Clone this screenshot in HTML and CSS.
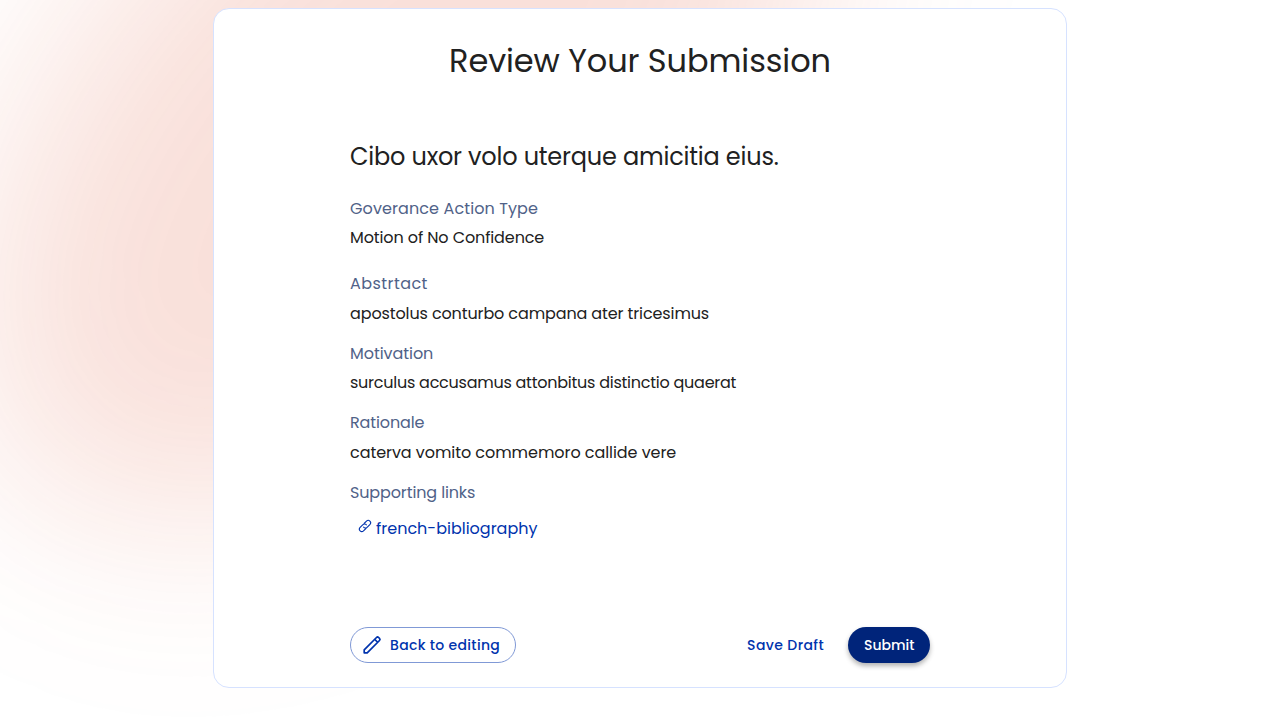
FILE: index.html
```html
<!DOCTYPE html>
<html lang="en">
<head>
<meta charset="utf-8">
<title>Review Your Submission</title>
<link rel="stylesheet" href="styles.css">
</head>
<body>
<div class="backdrop"><div class="glow"></div></div>
<main class="card">
  <h1 class="title">Review Your Submission</h1>
  <div class="content">
    <h2 class="subject">Cibo uxor volo uterque amicitia eius.</h2>
    <section class="field field-type"><h3 class="label">Goverance Action Type</h3><p class="value">Motion of No Confidence</p></section>
    <section class="field field-abstract"><h3 class="label">Abstrtact</h3><p class="value">apostolus conturbo campana ater tricesimus</p></section>
    <section class="field field-motivation"><h3 class="label">Motivation</h3><p class="value">surculus accusamus attonbitus distinctio quaerat</p></section>
    <section class="field field-rationale"><h3 class="label">Rationale</h3><p class="value">caterva vomito commemoro callide vere</p></section>
    <section class="field field-links"><h3 class="label">Supporting links</h3>
      <a class="link"><svg class="link-icon" viewBox="0 0 14 14"><g transform="rotate(-45 7 7)"><path d="M6.200 9.400H2.500a2.400 2.400 0 0 1 0-4.800H6.500a2.300 2.300 0 0 1 2.200 3"/><path d="M7.800 4.600h3.700a2.400 2.400 0 0 1 0 4.800H7.500a2.300 2.300 0 0 1-2.200-3"/></g></svg><span>french-bibliography</span></a>
    </section>
    <div class="actions">
      <button class="btn outlined"><svg class="pencil" viewBox="0 0 20 20"><path d="M2.200 17.800v-3L14.500 2.500a1.500 1.500 0 0 1 2.100 0l.9.900a1.500 1.500 0 0 1 0 2.100L5.200 17.800zM13 4.600l2.400 2.400"/></svg><span>Back to editing</span></button>
      <div class="right"><button class="btn save">Save Draft</button><button class="btn filled">Submit</button></div>
    </div>
  </div>
</main>
</body>
</html>
```

FILE: styles.css
```css
* { box-sizing: border-box; }
body { margin: 0; height: 720px; padding-top: 8px; overflow: hidden; background: #fff; font-family: Poppins, Inter, sans-serif; color: #212121; }
.backdrop { position: absolute; inset: 0; z-index: -1; overflow: hidden; }
.glow { position: absolute; left: -115px; top: -180px; width: 1030px; height: 580px; border-radius: 50%; background: rgba(218, 62, 22, .16); filter: blur(98px); transform: rotate(-43deg); }
.card { width: 854px; height: 680px; margin: 0 auto; border: 1px solid #d6e2ff; border-radius: 16px; background: #fff; }
.title { margin: 0; height: 132px; padding-top: 28px; text-align: center; font-size: 32px; line-height: 48px; font-weight: 400; letter-spacing: -.09px; }
.content { width: 580px; margin: 0 auto; }
.subject { margin: 0 0 23.600px; font-size: 24px; line-height: 32px; height: 32px; font-weight: 400; white-space: nowrap; letter-spacing: -.19px; }
.field { height: 69.600px; }
.field-type { height: 75.500px; }
.label, .value { margin: 0; font-size: 16px; line-height: 24px; font-weight: 400; white-space: nowrap; }
.label { color: #506288; margin-bottom: 5.600px; }
.field-type .label { letter-spacing: .1px; }
.field-type .value { letter-spacing: -.11px; }
.field-abstract .label { letter-spacing: .44px; }
.field-abstract .value { letter-spacing: -.12px; }
.field-motivation .label { letter-spacing: -.05px; }
.field-motivation .value { letter-spacing: -.25px; }
.field-rationale .label { letter-spacing: -.13px; }
.field-rationale .value { letter-spacing: -.06px; }
.field-links .label { letter-spacing: -.13px; }
.link { display: flex; align-items: center; gap: 4px; padding-left: 8px; margin-top: 12px; height: 24px; color: #0033ad; font-size: 16px; }
.link-icon { width: 14px; height: 14px; margin-top: -5px; fill: none; stroke: currentColor; stroke-width: 1.100; }
.actions { display: flex; justify-content: space-between; margin-top: 76.400px; }
.right { display: flex; gap: 8px; }
.btn { height: 36px; padding: 0 16px; border: 0; border-radius: 18px; background: none; font: 500 14px/24px Poppins, Inter, sans-serif; color: #0033ad; white-space: nowrap; display: flex; align-items: center; }
.outlined { width: 166px; padding: 0 11px; gap: 8px; border: 1px solid #8099d6; letter-spacing: .33px; }
.save { letter-spacing: .4px; }
.pencil { width: 20px; height: 20px; fill: none; stroke: currentColor; stroke-width: 1.700; stroke-linejoin: round; flex: none; }
.filled { width: 82px; background: #00247a; color: #fff; box-shadow: 0 3px 5px rgba(0,0,0,.3); }
```
